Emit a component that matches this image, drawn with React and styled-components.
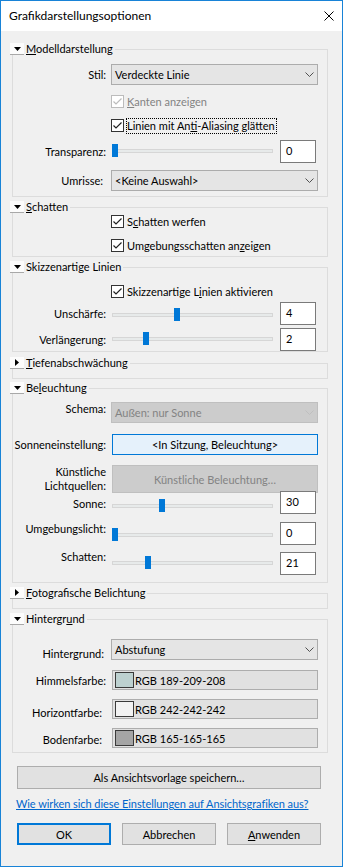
import React from 'react';
import styled, { createGlobalStyle, css } from 'styled-components';

const Global = createGlobalStyle`
  html, body { margin: 0; padding: 0; background: #f0f0f0; }
  body { font-family: Lato, "Noto Sans", sans-serif; font-size: 11px; color: #000; }
  * { box-sizing: border-box; }
  button { font: inherit; color: inherit; }
`;

const Window = styled.div`
  width: 343px;
  height: 867px;
  border: 1px solid #1883d7;
  background: #f0f0f0;
  display: flex;
  flex-direction: column;
  overflow: hidden;
`;

const TitleBar = styled.div`
  height: 30px;
  flex: none;
  background: #fff;
  display: flex;
  align-items: center;
  justify-content: space-between;
  padding: 0 8px 0 8px;
`;

const Title = styled.div`
  font-size: 12px;
  line-height: 14px;
`;

const Content = styled.div`
  display: flex;
  flex-direction: column;
  padding: 12px 14px 0 9px;
`;

const GroupWrap = styled.section`
  margin-top: ${p => p.$mt}px;
`;

const GroupHead = styled.div`
  display: flex;
  height: 12px;
`;

const Toggle = styled.span`
  flex: none;
  width: 14px;
  height: 12px;
  background: #fcfcfc;
  border-bottom: 1px solid #a8a8a8;
  display: flex;
  align-items: center;
  justify-content: center;
`;

const GroupLabel = styled.span`
  margin-left: 2px;
  line-height: 12px;
  white-space: nowrap;
`;

const GroupRule = styled.span`
  flex: 1;
  margin: 6px 0 0 2px;
  border-top: 1px solid #dcdcdc;
  border-right: 1px solid #dcdcdc;
`;

const GroupBody = styled.div`
  margin-left: 2px;
  border: 1px solid #dcdcdc;
  border-top: none;
  padding-bottom: ${p => p.$pb}px;
  display: flex;
  flex-direction: column;
`;

const U = styled.u`
  text-decoration: underline;
  text-underline-offset: 1px;
`;

function Group({ title, open = true, mt = 4, pb = 5, children }) {
  return (
    <GroupWrap $mt={mt}>
      <GroupHead>
        <Toggle>
          {open ? (
            <svg width="7" height="4" viewBox="0 0 7 4"><polygon points="0,0 7,0 3.5,4" fill="#000" /></svg>
          ) : (
            <svg width="4" height="7" viewBox="0 0 4 7"><polygon points="0,0 4,3.5 0,7" fill="#000" /></svg>
          )}
        </Toggle>
        <GroupLabel>{title}</GroupLabel>
        <GroupRule />
      </GroupHead>
      <GroupBody $pb={pb}>{children}</GroupBody>
    </GroupWrap>
  );
}

const FieldRow = styled.div`
  display: grid;
  grid-template-columns: 93px 1fr;
  column-gap: 5px;
  padding-right: 9px;
  margin-top: ${p => p.$mt}px;
  height: ${p => p.$h}px;
  align-items: center;
`;

const Label = styled.label`
  text-align: right;
  line-height: ${p => p.$lh || 13}px;
  white-space: nowrap;
  padding-right: ${p => p.$pr || 0}px;
  align-self: center;
  ${p => p.$dy && css`transform: translateY(${p.$dy}px);`}
`;

const SelectBox = styled.div`
  height: 100%;
  background: ${p => (p.$disabled ? '#cccccc' : '#e5e5e5')};
  border: 1px solid ${p => (p.$disabled ? '#bfbfbf' : '#acacac')};
  color: ${p => (p.$disabled ? '#838383' : '#000')};
  display: flex;
  align-items: center;
  justify-content: space-between;
  padding: 0 3px 0 3px;
  line-height: 13px;
`;

function Select({ value, disabled }) {
  return (
    <SelectBox $disabled={disabled}>
      <span>{value}</span>
      <svg width="9" height="5" viewBox="0 0 9 5">
        <polyline points="0.5,0.5 4.5,4.5 8.5,0.5" fill="none" stroke={disabled ? '#bfbfbf' : '#505050'} strokeWidth="1" />
      </svg>
    </SelectBox>
  );
}

const PushButton = styled.div`
  margin-left: 1px;
  height: 100%;
  border: 1px solid ${p => (p.$tone === 'active' ? '#0078d7' : '#bfbfbf')};
  background: ${p => (p.$tone === 'active' ? '#e5f1fb' : '#cccccc')};
  color: ${p => (p.$tone === 'active' ? '#000' : '#838383')};
  display: flex;
  align-items: center;
  justify-content: center;
  line-height: 13px;
`;

const CheckRow = styled.div`
  display: flex;
  align-items: center;
  gap: 2px;
  padding-left: 98px;
  margin-top: ${p => p.$mt}px;
  height: 13px;
`;

const CheckBox = styled.span`
  flex: none;
  width: 13px;
  height: 13px;
  border: 1px solid ${p => (p.$disabled ? '#bcbcbc' : '#333333')};
  background: #fff;
  display: flex;
`;

const CheckLabel = styled.span`
  line-height: 14px;
  padding-right: 1px;
  border: 1px ${p => (p.$focus ? 'dotted #000' : 'solid transparent')};
  color: ${p => (p.$disabled ? '#838383' : '#000')};
  white-space: nowrap;
`;

function Check({ label, disabled, focus, mt }) {
  return (
    <CheckRow $mt={mt}>
      <CheckBox $disabled={disabled}>
        <svg width="11" height="11" viewBox="0 0 11 11">
          <polyline points="1.5,5.5 4,8 9.5,2.5" fill="none" stroke={disabled ? '#bcbcbc' : '#222'} strokeWidth="1.2" />
        </svg>
      </CheckBox>
      <CheckLabel $disabled={disabled} $focus={focus}>{label}</CheckLabel>
    </CheckRow>
  );
}

const SliderRow = styled.div`
  display: grid;
  grid-template-columns: 93px 164px 36px;
  column-gap: 5px;
  margin-top: ${p => p.$mt}px;
  height: 23px;
  align-items: start;
`;

const SliderCell = styled.div`
  position: relative;
  height: 13px;
  margin-top: ${p => p.$off}px;
`;

const Track = styled.div`
  margin: 5px 0 0 1px;
  width: 161px;
  height: 4px;
  background: #e7eaea;
  border: 1px solid #d6d6d6;
`;

const Thumb = styled.div`
  position: absolute;
  top: 0;
  width: 6px;
  height: 13px;
  background: #0078d7;
`;

const NumBox = styled.div`
  height: 23px;
  background: #fff;
  border: 1px solid #7a7a7a;
  padding: 3px 0 0 5px;
  line-height: 13px;
`;

function Slider({ label, value, max = 100, mt, off, dy }) {
  const left = 1 + Math.round((value / max) * 155);
  return (
    <SliderRow $mt={mt}>
      <Label $dy={dy}>{label}</Label>
      <SliderCell $off={off}>
        <Track />
        <Thumb style={{ left }} />
      </SliderCell>
      <NumBox>{value}</NumBox>
    </SliderRow>
  );
}

const ColorBox = styled.div`
  margin-left: 1px;
  height: 100%;
  background: #e1e1e1;
  border: 1px solid #adadad;
  display: flex;
  align-items: center;
  gap: 1px;
  padding-left: 2px;
  line-height: 13px;
`;

const Swatch = styled.span`
  flex: none;
  width: 19px;
  height: 16px;
  border: 1px solid #3a3a3a;
  background: ${p => p.$color};
`;

function ColorField({ r, g, b }) {
  return (
    <ColorBox>
      <Swatch $color={`rgb(${r},${g},${b})`} />
      <span>RGB {r}-{g}-{b}</span>
    </ColorBox>
  );
}

const SaveButton = styled.button`
  margin: 13px 0 0 7px;
  width: 304px;
  height: 23px;
  padding: 0;
  background: #e1e1e1;
  border: 1px solid #adadad;
  line-height: 13px;
`;

const HelpLink = styled.a`
  align-self: flex-start;
  margin: 8px 0 0 6px;
  line-height: 14px;
  color: #0066cc;
  text-decoration: underline;
  white-space: nowrap;
  letter-spacing: -0.06px;
`;

const ButtonRow = styled.div`
  display: flex;
  gap: 11px;
  margin: 12px 0 0 7px;
`;

const DialogButton = styled.button`
  width: 94px;
  height: 22px;
  padding: 0;
  background: #e1e1e1;
  border: ${p => (p.$default ? '2px solid #0078d7' : '1px solid #adadad')};
  line-height: 13px;
`;

export default function App() {
  return (
    <>
      <Global />
      <Window>
        <TitleBar>
          <Title>Grafikdarstellungsoptionen</Title>
          <svg width="10" height="10" viewBox="0 0 10 10">
            <path d="M0.5 0.5 L9.5 9.5 M9.5 0.5 L0.5 9.5" stroke="#000" strokeWidth="1" fill="none" />
          </svg>
        </TitleBar>
        <Content>
          <Group mt={0} pb={5} title={<><U>M</U>odelldarstellung</>}>
            <FieldRow $mt={9} $h={21}>
              <Label>Stil:</Label>
              <Select value="Verdeckte Linie" />
            </FieldRow>
            <Check mt={10} disabled label={<><U>K</U>anten anzeigen</>} />
            <Check mt={11} focus label={<>Linien mit An<U>t</U>i-Aliasing glätten</>} />
            <Slider mt={8} off={4} label="Transparenz:" value={0} />
            <FieldRow $mt={7} $h={21}>
              <Label $pr={3}>Umrisse:</Label>
              <Select value="<Keine Auswahl>" />
            </FieldRow>
          </Group>

          <Group pb={4} title={<><U>S</U>chatten</>}>
            <Check mt={2} label={<>S<U>c</U>hatten werfen</>} />
            <Check mt={11} label={<>Umgebungsschatten an<U>z</U>eigen</>} />
          </Group>

          <Group pb={0} title={<>Skizzenarti<U>g</U>e Linien</>}>
            <Check mt={12} label={<>Skizzenartige L<U>i</U>nien aktivieren</>} />
            <Slider mt={4} off={6} label="Unschärfe:" value={4} max={10} />
            <Slider mt={3} off={4} label="Verlängerung:" value={2} max={10} />
          </Group>

          <Group mt={5} open={false} pb={9} title={<><U>T</U>iefenabschwächung</>} />

          <Group mt={3} pb={7} title={<>Be<U>l</U>euchtung</>}>
            <FieldRow $mt={8} $h={21}>
              <Label $dy={-4}>Schema:</Label>
              <Select value="Außen: nur Sonne" disabled />
            </FieldRow>
            <FieldRow $mt={11} $h={21}>
              <Label>Sonneneinstellung:</Label>
              <PushButton $tone="active">&lt;In Sitzung, Beleuchtung&gt;</PushButton>
            </FieldRow>
            <FieldRow $mt={10} $h={21}>
              <Label $lh={14}>Künstliche<br />Lichtquellen:</Label>
              <PushButton $tone="disabled">Künstliche Beleuchtung…</PushButton>
            </FieldRow>
            <Slider mt={5} off={8} dy={1} label="Sonne:" value={30} />
            <Slider mt={8} off={6} dy={-5} label="Umgebungslicht:" value={0} />
            <Slider mt={7} off={4} dy={-7} label="Schatten:" value={21} />
          </Group>

          <Group open={false} pb={9} title={<><U>F</U>otografische Belichtung</>} />

          <Group pb={4} title={<>Hintergr<U>u</U>nd</>}>
            <FieldRow $mt={14} $h={21}>
              <Label $dy={4} $pr={2}>Hintergrund:</Label>
              <Select value="Abstufung" />
            </FieldRow>
            <FieldRow $mt={10} $h={20}>
              <Label>Himmelsfarbe:</Label>
              <ColorField r={189} g={209} b={208} />
            </FieldRow>
            <FieldRow $mt={9} $h={20}>
              <Label $dy={3} $pr={4}>Horizontfarbe:</Label>
              <ColorField r={242} g={242} b={242} />
            </FieldRow>
            <FieldRow $mt={9} $h={20}>
              <Label $dy={1} $pr={4}>Bodenfarbe:</Label>
              <ColorField r={165} g={165} b={165} />
            </FieldRow>
          </Group>

          <SaveButton>Als Ansichtsvorlage speichern…</SaveButton>
          <HelpLink href="#">Wie wirken sich diese Einstellungen auf Ansichtsgrafiken aus?</HelpLink>
          <ButtonRow>
            <DialogButton $default>OK</DialogButton>
            <DialogButton>Abbrechen</DialogButton>
            <DialogButton><U>A</U>nwenden</DialogButton>
          </ButtonRow>
        </Content>
      </Window>
    </>
  );
}
